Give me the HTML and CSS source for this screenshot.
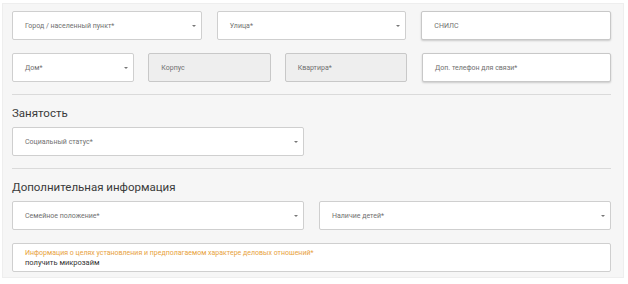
FILE: index.html
```html
<!DOCTYPE html>
<html lang="ru">
<head>
    <meta charset="UTF-8">
    <meta name="viewport" content="width=device-width, initial-scale=1.0">
    <title>Анкета</title>
    <link rel="stylesheet" href="styles.css">
</head>
<body>

<div class="panel">
    <div class="row">
        <div class="field select third">Город / населенный пункт*</div>
        <div class="field select third">Улица*</div>
        <div class="field input third">СНИЛС</div>
    </div>

    <div class="row">
        <div class="two-thirds">
            <div class="field select">Дом*</div>
            <div class="field disabled">Корпус</div>
            <div class="field disabled">Квартира*</div>
        </div>
        <div class="field input third">Доп. телефон для связи*</div>
    </div>

    <div class="divider"></div>

    <h2>Занятость</h2>
    <div class="row">
        <div class="field select half">Социальный статус*</div>
    </div>

    <div class="divider"></div>

    <h2>Дополнительная информация</h2>
    <div class="row">
        <div class="field select half">Семейное положение*</div>
        <div class="field select half">Наличие детей*</div>
    </div>

    <div class="row">
        <div class="field textarea">
            <span class="label">Информация о целях установления и предполагаемом характере деловых отношений*</span>
            <span class="value">получить микрозайм</span>
        </div>
    </div>
</div>

</body>
</html>
```

FILE: styles.css
```css
body {
    margin: 0;
    background-color: #fff;
    font-family: Roboto, "Liberation Sans", sans-serif;
    color: #333;
}

.panel {
    margin: 3px 4px 0 2px;
    padding: 7px 12px 4px 9px;
    height: 262px;
    background-color: #f6f6f6;
    border: 1px solid #eeeeee;
    box-sizing: content-box;
}

.row {
    display: flex;
    gap: 15px;
    margin-bottom: 13px;
}

.third {
    flex: 1 1 0;
}

.half {
    flex: 0 0 292px;
}

.two-thirds {
    flex: 0 0 395px;
    display: flex;
    gap: 14px;
}

.two-thirds .field {
    flex: 1 1 0;
}

.field {
    position: relative;
    box-sizing: border-box;
    height: 29px;
    padding: 0 12px;
    display: flex;
    align-items: center;
    font-size: 7px;
    color: #707070;
    background-color: #fff;
    border: 1px solid #cfcfcf;
    border-radius: 2px;
    white-space: nowrap;
}

.select::after {
    content: "";
    position: absolute;
    right: 5px;
    top: 13px;
    border-left: 2px solid transparent;
    border-right: 2px solid transparent;
    border-top: 2px solid #777;
}

.input {
    border-color: #c8c8c8;
    box-shadow: 0 1px 2px rgba(0, 0, 0, 0.18);
}

.disabled {
    background-color: #eeeeee;
    border-color: #c8c8c8;
}

.textarea {
    flex: 1 1 0;
    flex-direction: column;
    align-items: flex-start;
    justify-content: center;
    gap: 1px;
    height: 29px;
}

.textarea .label {
    color: #e8a23c;
    font-size: 7px;
}

.textarea .value {
    color: #333;
    font-size: 7.5px;
}

.divider {
    height: 1px;
    background-color: #dadada;
    margin: -1px 0 10px;
}

h2 {
    margin: 0 0 6px;
    font-size: 11.5px;
    font-weight: normal;
    color: #3a3a3a;
    line-height: 16px;
}
```
